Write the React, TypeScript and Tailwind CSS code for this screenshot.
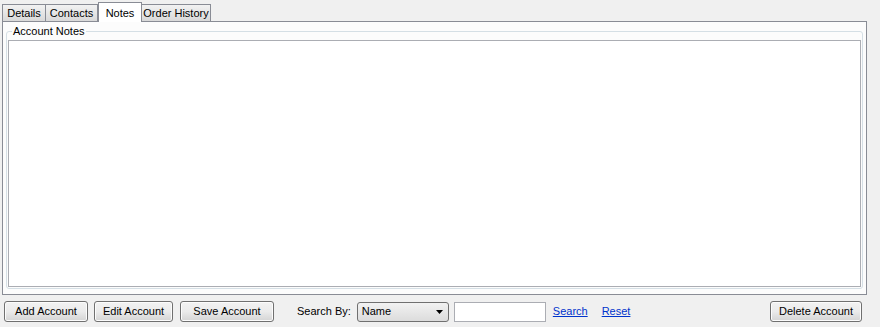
import React from "react";

const tabs = [
  { label: "Details", w: "w-[44px]" },
  { label: "Contacts", w: "w-[53px]" },
  { label: "Notes", w: "w-[44px]", active: true },
  { label: "Order History", w: "w-[70px]" },
];

function WinButton({ label, className }: { label: string; className: string }) {
  return (
    <button
      className={`h-[21px] rounded-[3px] border border-[#707070] bg-gradient-to-b from-[#f2f2f2] via-[#ebebeb] to-[#d4d4d4] text-[11px] text-black shadow-[inset_0_0_0_1px_#fcfcfc] ${className}`}
    >
      {label}
    </button>
  );
}

export default function App() {
  return (
    <div className="w-[880px] h-[327px] bg-[#f0f0f0] font-['Liberation_Sans',Arial,sans-serif] text-[11px] text-black flex flex-col overflow-hidden">
      {/* tab strip */}
      <div className="flex items-end h-[21px] pl-[2px]">
        {tabs.map((t) =>
          t.active ? (
            <div
              key={t.label}
              className={`${t.w} relative z-10 -mb-px h-[20px] border border-b-0 border-[#898c95] bg-white flex items-start justify-center pt-[2px]`}
            >
              {t.label}
            </div>
          ) : (
            <div
              key={t.label}
              className={`${t.w} h-[17px] border border-b-0 border-[#898c95] bg-gradient-to-b from-[#f2f2f2] to-[#d9d9d9] flex items-center justify-center -ml-px first:ml-0`}
            >
              {t.label}
            </div>
          )
        )}
      </div>

      {/* tab page */}
      <div className="ml-[2px] w-[865px] h-[274px] border border-[#898c95] bg-[#fcfcfc] px-[3px] pt-[9px] pb-[5px] flex">
        <div className="relative flex-1 rounded-[3px] border border-[#d5dfe5] px-[1px] pt-[8px] pb-[1px] flex">
          <span className="absolute left-[5px] -top-[8px] bg-[#fcfcfc] px-[1px] leading-[14px]">
            Account Notes
          </span>
          <textarea className="flex-1 resize-none border border-[#abadb3] bg-white outline-none" />
        </div>
      </div>

      {/* bottom bar */}
      <div className="flex items-center pl-[4px] pt-[6px]">
        <WinButton label="Add Account" className="w-[84px]" />
        <WinButton label="Edit Account" className="w-[79px] ml-[6px]" />
        <WinButton label="Save Account" className="w-[94px] ml-[7px]" />
        <span className="ml-[23px]">Search By:</span>
        <div className="ml-[6px] w-[92px] h-[20px] rounded-[3px] border border-[#707070] bg-gradient-to-b from-[#f2f2f2] to-[#dcdcdc] flex items-center justify-between pl-[4px] pr-[5px]">
          <span>Name</span>
          <svg width="7" height="4" viewBox="0 0 7 4">
            <path d="M0 0h7L3.5 4z" fill="#000" />
          </svg>
        </div>
        <input className="ml-[5px] w-[92px] h-[20px] border border-[#abadb3] bg-white outline-none" />
        <a className="ml-[7px] text-[#0033cc] underline">Search</a>
        <a className="ml-[14px] text-[#0033cc] underline">Reset</a>
        <WinButton label="Delete Account" className="w-[92px] ml-auto mr-[18px]" />
      </div>
    </div>
  );
}
